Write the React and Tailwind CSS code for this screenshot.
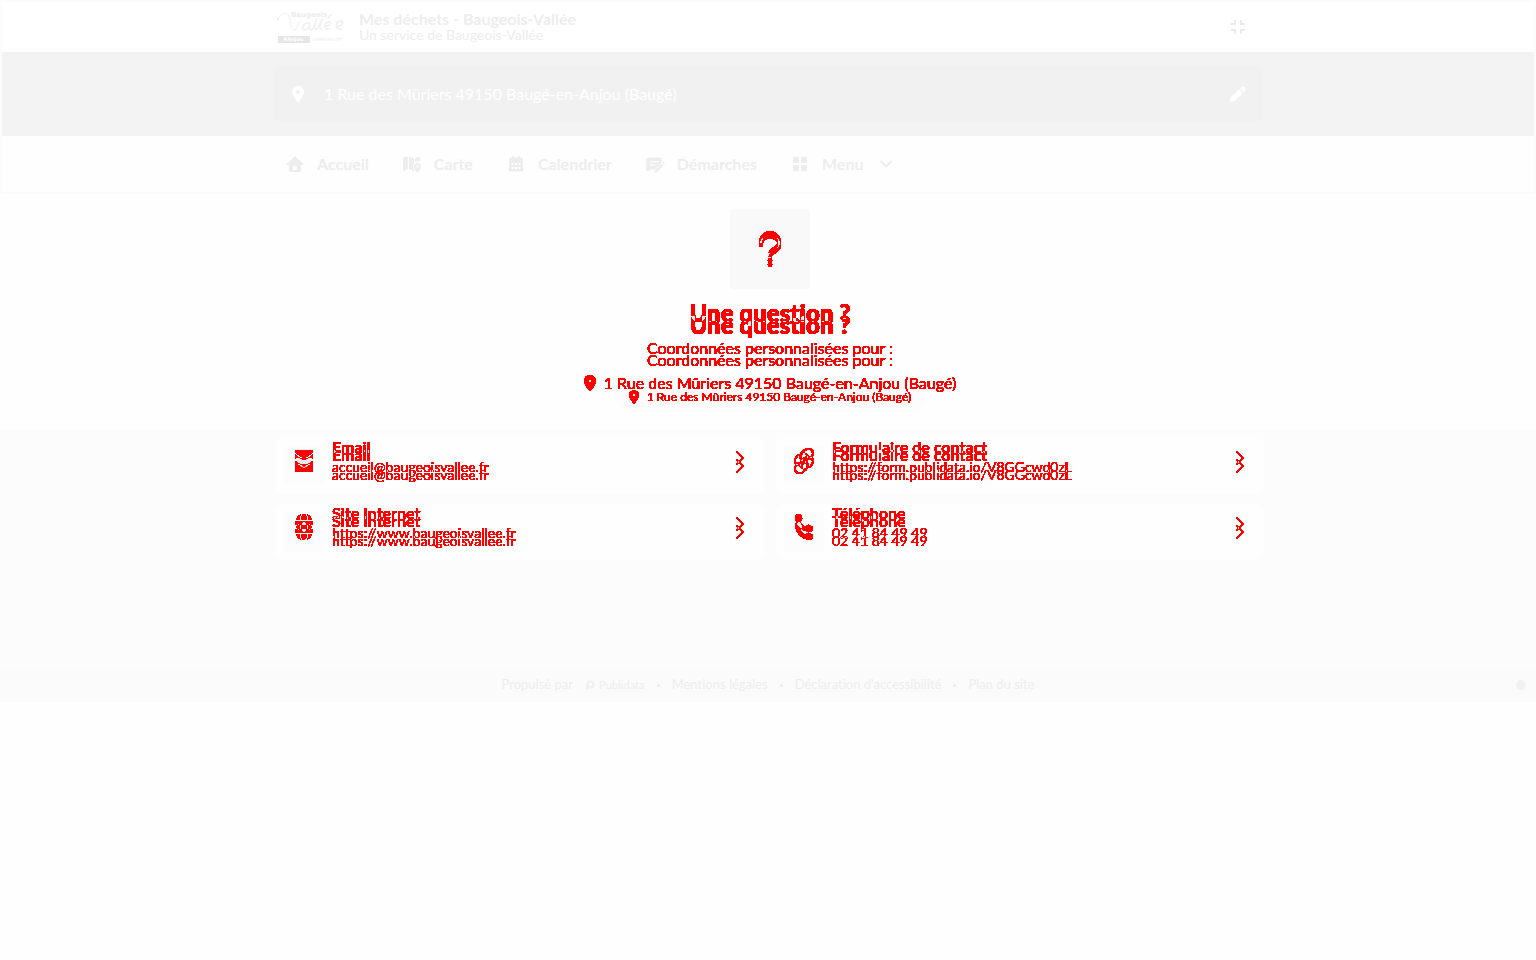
import clsx from 'clsx'
import { MdFullscreenExit } from 'react-icons/md'
import { FaLocationDot } from 'react-icons/fa6'

// Keeps what is drawn once in red and what is drawn twice in light grey
function DiffFilter() {
  const steps = '1 1 1 1 1 1 1 1 1 1 1 1 1 0.92 0.92 0.92 0.92 0.92 0.92 0.92'
  const tint = '0 0 0 0 0 0 0 0 0 0 0 0 0 0.92 0.92 0.92 0.92 0.92 0.92 0.92'
  return (
    <svg width="0" height="0" className="absolute" aria-hidden="true">
      <filter id="diff" colorInterpolationFilters="sRGB">
        <feColorMatrix values="0 0 0 1 0  0 0 0 1 0  0 0 0 1 0  0 0 0 1 0" />
        <feComponentTransfer>
          <feFuncR type="discrete" tableValues={steps} />
          <feFuncG type="discrete" tableValues={tint} />
          <feFuncB type="discrete" tableValues={tint} />
          <feFuncA type="discrete" tableValues="0 1 1 1 1 1 1 1 1 1 1 1 1 1 1 1 1 1 1 1" />
        </feComponentTransfer>
      </filter>
    </svg>
  )
}

function Diff({ children, shift = 'pt-2', end = 'pb-2', className }) {
  return (
    <div className={clsx('grid text-[#ff0000] [filter:url(#diff)]', className)}>
      <div className={clsx('[grid-area:1/1] opacity-50', end)}>{children}</div>
      <div className={clsx('[grid-area:1/1] opacity-50', shift)} aria-hidden="true">{children}</div>
    </div>
  )
}

function Svg({ children, className = 'w-5 h-5', box = '0 0 20 20' }) {
  return (
    <svg viewBox={box} className={className} fill="currentColor" aria-hidden="true">
      {children}
    </svg>
  )
}

const HomeIcon = () => (
  <Svg>
    <path fillRule="evenodd" d="M10 2.2 1.8 9.8c-.5.5-.2 1.2.5 1.2H4v5.5c0 1 .6 1.5 1.5 1.5h9c.9 0 1.5-.5 1.5-1.5V11h1.700c.7 0 1-.7.5-1.200zM8 16v-3c0-.6.4-1 1-1h2c.6 0 1 .4 1 1v3z" />
  </Svg>
)

const MapIcon = () => (
  <Svg>
    <path d="M1 4.800c0-.8.5-1.300 1.200-1.600L5.800 2.500v12.500L1 17.500zM7 2.500l5 2v5c-1.200 1.300-1.200 3.500 0 5.500V17l-5-2zM13.200 4.500l3-1.400c1-.4 1.800 0 1.800 1v3.600c-1.700-.8-3.600-.5-4.800.6z" />
    <path fillRule="evenodd" d="M15.500 9a3.500 3.500 0 0 0-3.500 3.500c0 2.500 3.500 6.500 3.500 6.500s3.500-4 3.500-6.500A3.500 3.500 0 0 0 15.500 9zm0 2.300a1.200 1.200 0 1 1 0 2.400 1.200 1.200 0 0 1 0-2.400z" />
  </Svg>
)

const CalendarIcon = () => (
  <Svg>
    <path fillRule="evenodd" d="M6 2v1.500H4.500C3.500 3.500 3 4.100 3 5v11c0 1 .5 1.500 1.500 1.500h11c1 0 1.500-.5 1.500-1.500V5c0-.9-.5-1.500-1.500-1.500H14V2h-1.500v1.500h-5V2zM5.500 9h2v2h-2zm3.500 0h2v2H9zm3.500 0h2v2h-2zm-7 4h2v2h-2zM9 13h2v2H9zm3.500 0h2v2h-2z" />
  </Svg>
)

const FormIcon = () => (
  <Svg>
    <path fillRule="evenodd" d="M3 3.500h12c1 0 1.800.8 1.800 1.800V8L9.500 15.500H5.500L3 17c-1 .5-1.800.2-1.800-1V5.300c0-1 .8-1.800 1.800-1.800zM5 7v1.300h9V7zm0 3.500v1.300h5.500v-1.300z" />
    <path d="m16.500 9.500 2 2-6.500 6.500-2.500.8.600-2.700zM17.200 8.800l.6-.6c.8-.7 2.500.8 1.700 1.800l-.5.600z" />
  </Svg>
)

const GridIcon = () => (
  <Svg>
    <rect x="3" y="3" width="6" height="6" rx="1" />
    <rect x="11" y="3" width="6" height="6" rx="1" />
    <rect x="3" y="11" width="6" height="6" rx="1" />
    <rect x="11" y="11" width="6" height="6" rx="1" />
  </Svg>
)

const ChevronDown = () => (
  <svg viewBox="0 0 14 10" className="ml-1 h-[10px] w-[14px]" fill="none" stroke="currentColor" strokeWidth="2" strokeLinecap="round" strokeLinejoin="round" aria-hidden="true">
    <path d="m2 2.500 5 5 5-5" />
  </svg>
)

const ChevronRight = () => (
  <svg viewBox="0 0 10 14" className="h-[14px] w-[10px]" fill="none" stroke="currentColor" strokeWidth="1.500" aria-hidden="true">
    <path d="m1.500 1 6.500 6-6.500 6" />
  </svg>
)

const PencilIcon = () => (
  <Svg className="w-4 h-4" box="0 0 16 16">
    <path d="M9 3.200 12.800 7l-7 7c-1 1-2.500 1.700-5.500 2-.3 0-.4-.2-.3-.5.2-2.500.8-4.300 2-5.500zM10 2.300 11.600.8c1-1 2-1 3 0l.7.8c.9 1 .9 1.900 0 2.800L13.700 6z" />
  </Svg>
)

const MailIcon = () => (
  <Svg className="w-[18px] h-[14px]" box="0 0 18 14">
    <path d="M2 0h14c1.200 0 2 .8 2 1.700 0 .5-.2.8-.6 1.100L9.800 8.200c-.5.300-1.100.3-1.600 0L.6 2.800C.2 2.500 0 2.200 0 1.700 0 .8.800 0 2 0zM0 4.600l7.300 5.100c1 .7 2.400.7 3.400 0L18 4.600V11.500c0 1.500-1 2.500-2.500 2.500h-13C1 14 0 13 0 11.500z" />
  </Svg>
)

const GlobeIcon = () => (
  <Svg className="w-[18px] h-[18px]" box="0 0 18 18">
    <path d="M6 5.200C6.400 2.200 7.600 0 9 0s2.600 2.200 3 5.200zM5.700 9c0-.7 0-1.400.1-2h6.400c.1 1.300.1 2.700 0 4H5.800c-.1-.6-.1-1.300-.1-2zm.3 3.800h6C11.600 15.800 10.400 18 9 18s-2.600-2.200-3-5.200zM.8 5.200A9 9 0 0 1 6 .5C5.200 1.600 4.600 3.300 4.400 5.200zM.2 7h4c-.1 1.300-.1 2.700 0 4h-4a9 9 0 0 1 0-4zm.6 5.800h3.600c.2 1.900.8 3.600 1.600 4.700a9 9 0 0 1-5.200-4.700zM17.200 5.200A9 9 0 0 0 12 .5c.8 1.100 1.400 2.800 1.600 4.700zM17.800 7h-4c.1 1.300.1 2.700 0 4h4a9 9 0 0 0 0-4zm-.6 5.800h-3.600c-.2 1.900-.8 3.600-1.600 4.700a9 9 0 0 0 5.200-4.700z" />
  </Svg>
)

const LinkIcon = () => (
  <svg viewBox="0 0 22 18" className="w-[22px] h-[18px]" fill="none" stroke="currentColor" strokeWidth="2" strokeLinecap="round" aria-hidden="true">
    <path d="M9 12a4.600 4.600 0 0 1-.5-6.500l3-3a4.700 4.700 0 0 1 7.500 6l-2 2.500" />
    <path d="M13 6a4.600 4.600 0 0 1 .5 6.500l-3 3A4.700 4.700 0 0 1 3 9.500L5 7" />
  </svg>
)

const PhoneIcon = () => (
  <Svg className="w-[18px] h-[18px]" box="0 0 512 512">
    <path d="M164.900 24.600c-7.700-18.600-28-28.500-47.400-23.200l-88 24C12.100 30.200 0 46 0 64c0 247.400 200.600 448 448 448 18 0 33.800-12.100 38.600-29.500l24-88c5.300-19.400-4.600-39.700-23.200-47.400l-96-40c-16.300-6.800-35.200-2.100-46.300 11.600L304.700 368C234.300 334.700 177.300 277.700 144 207.300l49.300-40.300c13.700-11.200 18.400-30 11.600-46.300z" />
  </Svg>
)

const QuestionIcon = () => (
  <svg viewBox="0 0 24 34" className="w-6 h-[34px]" fill="none" aria-hidden="true">
    <path d="M2.800 13v-1.500C2.800 6.500 7 2.800 12 2.800s9.300 3.700 9.300 8.700c0 6.500-8.300 6.500-9.300 11.500" stroke="currentColor" strokeWidth="3" />
    <circle cx="12" cy="30.500" r="2.300" fill="currentColor" />
  </svg>
)

function Logo() {
  return (
    <svg viewBox="0 0 68 36" className="w-[68px] h-9 shrink-0" role="img" aria-label="Baugeois Vallée" fill="#ececec">
      <text x="14" y="8" fontSize="7" fontWeight="700" fontFamily="DejaVu Sans, sans-serif">Baugeois</text>
      <g fill="none" stroke="#efefef" strokeLinecap="round">
        <path d="M1 10c5-8 9-8 11-2s2 12 5 13 3-6 7-10" strokeWidth="1" />
        <path d="M32 14c-6-1-8 7-4 7s5-6 5-7c-2 5 0 9 3 6l4-11c-3 7-3 12 0 11l6-11c-4 8-4 12-1 11" strokeWidth="1.500" />
        <path d="M49 17c5 0 6-5 2-4-5 2-4 8 1 7M59 17c7 1 9-6 4-5-6 2-5 9 2 8M51 9l3-3" strokeWidth="1.500" />
      </g>
      <path d="M1 27h32v7H1z" fill="#e6e6e6" />
      <text x="6" y="32" fontSize="5" fontWeight="700" fill="#ffffff" fontFamily="DejaVu Sans, sans-serif">#Anjou</text>
      <text x="35" y="32" fontSize="4" fontFamily="DejaVu Sans, sans-serif">COMMUNAUTÉ</text>
      <circle cx="1" cy="10" r="1" />
    </svg>
  )
}

const address = '1 Rue des Mûriers 49150 Baugé-en-Anjou (Baugé)'

const nav = [
  { label: 'Accueil', icon: HomeIcon },
  { label: 'Carte', icon: MapIcon },
  { label: 'Calendrier', icon: CalendarIcon },
  { label: 'Démarches', icon: FormIcon },
]

const contacts = [
  { title: 'Email', value: 'accueil@baugeoisvallee.fr', href: 'mailto:accueil@baugeoisvallee.fr', icon: MailIcon },
  { title: 'Formulaire de contact', value: 'https://form.publidata.io/V8GGcwd0zL', href: 'https://form.publidata.io/V8GGcwd0zL', icon: LinkIcon },
  { title: 'Site Internet', value: 'https://www.baugeoisvallee.fr', href: 'https://www.baugeoisvallee.fr', icon: GlobeIcon },
  { title: 'Téléphone', value: '02 41 84 49 49', href: 'tel:0241844949', icon: PhoneIcon },
]

function ContactCard({ title, value, href, icon: Icon }) {
  return (
    <a href={href} className="flex h-14 items-center rounded-lg bg-[#fefefe] pl-2 pr-[19px]">
      <span className="flex h-10 w-10 shrink-0 items-center justify-center rounded bg-[#fcfcfc] pb-[10px]">
        <Diff><Icon /></Diff>
      </span>
      <span className="ml-2 flex-1 pb-[10px]">
        <Diff>
          <div className="text-base leading-5 font-bold">{title}</div>
          <div className="text-sm leading-5">{value}</div>
        </Diff>
      </span>
      <span className="pb-2">
        <Diff><ChevronRight /></Diff>
      </span>
    </a>
  )
}

export default function App() {
  return (
    <div className="min-h-screen bg-[#fefefe] font-['Lato',sans-serif] text-[#ededed] [font-variant-ligatures:none]">
      <DiffFilter />
      <div className="border-2 border-b-0 border-[#fcfcfc]">
        <header className="bg-white">
          <div className="mx-auto flex h-[50px] max-w-[990px] items-center pl-1 pr-[13px]">
            <Logo />
            <div className="ml-[14px] flex-1">
              <h1 className="text-base leading-4 font-bold">Mes déchets - Baugeois-Vallée</h1>
              <p className="text-sm leading-4">Un service de Baugeois-Vallée</p>
            </div>
            <button aria-label="Quitter le plein écran">
              <MdFullscreenExit className="h-6 w-6 text-[#eaeaea]" />
            </button>
          </div>
        </header>
        <div className="bg-[#f3f3f3] py-[14px]">
          <button className="mx-auto flex h-14 w-full max-w-[990px] items-center rounded-lg bg-[#f1f1f1] pr-[17px] pl-[19px] text-left text-white">
            <FaLocationDot className="h-4 w-3" />
            <span className="ml-5 flex-1 text-base">{address}</span>
            <PencilIcon />
          </button>
        </div>
        <nav className="border-b-2 border-[#fbfbfb]">
          <div className="mx-auto flex h-14 max-w-[990px] items-center gap-[33px] pl-3 text-base font-bold">
            {nav.map(({ label, icon: Icon }) => (
              <a key={label} href="#" className="flex items-center gap-3">
                <Icon />
                {label}
              </a>
            ))}
            <button className="flex items-center gap-3">
              <GridIcon />
              Menu
              <ChevronDown />
            </button>
          </div>
        </nav>
      </div>

      <section className="flex flex-col items-center pt-[15px] pl-1">
        <div className="flex h-20 w-20 items-center justify-center rounded bg-[#f9f9f9]">
          <Diff shift="pt-1" end="pb-1"><QuestionIcon /></Diff>
        </div>
        <Diff shift="pt-3" end="pb-3" className="mt-2">
          <h2 className="text-2xl leading-8 font-extrabold">Une question ?</h2>
        </Diff>
        <Diff shift="pt-3" end="pb-3" className="-mt-[5px]">
          <p className="text-base leading-6">Coordonnées personnalisées pour :</p>
        </Diff>
        {/* The address before and after it became a pill */}
        <div className="-mt-[5px] grid justify-items-center">
          <div className="z-10 mt-1 self-start text-[#ff0000] [filter:url(#diff)] [grid-area:1/1]">
            <div className="flex items-center gap-2 text-base leading-6 opacity-50">
              <FaLocationDot className="h-4 w-3" />
              <span>{address}</span>
            </div>
          </div>
          <div className="mt-[15px] flex h-[30px] items-center rounded-full bg-[#fcfcfc] px-[14px] [grid-area:1/1]">
            <div className="text-[#ff0000] [filter:url(#diff)]" aria-hidden="true">
              <div className="flex items-center gap-2 text-xs opacity-50">
                <FaLocationDot className="h-[14px] w-[10px]" />
                <span>{address}</span>
              </div>
            </div>
          </div>
        </div>
      </section>

      <main className="mt-[18px] bg-[#fcfcfc] pt-2 pb-[110px] pl-1">
        <div className="mx-auto grid max-w-[988px] grid-cols-2 gap-x-3 gap-y-[10px]">
          {contacts.map((c) => (
            <ContactCard key={c.title} {...c} />
          ))}
        </div>
      </main>

      <footer className="flex h-8 items-center bg-[#fbfbfb] pr-[10px] pb-[2px] pl-5 text-[13px] text-[#ededed]">
        <div className="flex flex-1 items-center justify-center gap-3">
          <span>Propulsé par</span>
          <a href="#" className="flex items-center gap-1 text-[11px] font-semibold text-[#efefef]">
            <svg viewBox="0 0 10 10" className="h-[10px] w-[10px]" fill="none" stroke="currentColor" strokeWidth="2" aria-hidden="true">
              <circle cx="5.500" cy="4.500" r="3" />
              <path d="M2 6v3.500" />
            </svg>
            Publidata
          </a>
          <span className="h-[3px] w-[3px] rounded-full bg-[#ebebeb]" />
          <a href="#">Mentions légales</a>
          <span className="h-[3px] w-[3px] rounded-full bg-[#ebebeb]" />
          <a href="#">Déclaration d'accessibilité</a>
          <span className="h-[3px] w-[3px] rounded-full bg-[#ebebeb]" />
          <a href="#">Plan du site</a>
        </div>
        <span className="h-[10px] w-[10px] rounded-full bg-[#f2f2f2]" />
      </footer>
    </div>
  )
}
